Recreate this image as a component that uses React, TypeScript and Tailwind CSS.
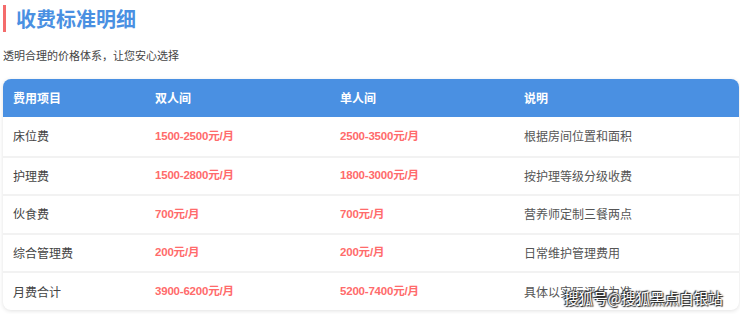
import React from 'react';

const rows = [
  { item: '床位费', double: '1500-2500元/月', single: '2500-3500元/月', note: '根据房间位置和面积' },
  { item: '护理费', double: '1500-2800元/月', single: '1800-3000元/月', note: '按护理等级分级收费' },
  { item: '伙食费', double: '700元/月', single: '700元/月', note: '营养师定制三餐两点' },
  { item: '综合管理费', double: '200元/月', single: '200元/月', note: '日常维护管理费用' },
  { item: '月费合计', double: '3900-6200元/月', single: '5200-7400元/月', note: '具体以实际评估为准' },
];

const cols = 'grid grid-cols-[142px_185px_184px_1fr] items-center';

const App: React.FC = () => {
  return (
    <div className="relative w-[740px] h-[314px] bg-white overflow-hidden font-['Noto_Sans_CJK_SC',sans-serif]">
      {/* Title */}
      <div className="flex items-center h-[27px] mt-[5px] ml-[3px] border-l-[3px] border-[#f46c6c] pl-[10px]">
        <h2 className="text-[20px] font-bold text-[#4a90e2] leading-none">收费标准明细</h2>
      </div>
      <p className="mt-[15px] ml-[3px] text-[11px] leading-[16px] text-[#444]">透明合理的价格体系，让您安心选择</p>

      {/* Table */}
      <div className="mt-[16px] ml-[3px] w-[736px] rounded-[8px] overflow-hidden bg-white shadow-[0_1px_4px_rgba(0,0,0,0.12)]">
        <div className={`${cols} h-[38px] bg-[#4a90e2] text-white text-[12px] font-bold`}>
          <span className="pl-[10px]">费用项目</span>
          <span className="pl-[10px]">双人间</span>
          <span className="pl-[10px]">单人间</span>
          <span className="pl-[10px]">说明</span>
        </div>
        {rows.map((r, i) => (
          <div
            key={r.item}
            className={`${cols} h-[38.6px] text-[12px] ${i > 0 ? 'border-t-2 border-[#f2f2f2]' : ''}`}
          >
            <span className="pl-[10px] text-[#444]">{r.item}</span>
            <span className="pl-[10px] text-[11.5px] tracking-[-0.2px] text-[#ff6b6b] font-bold font-['Liberation_Sans','Noto_Sans_CJK_SC',sans-serif]">{r.double}</span>
            <span className="pl-[10px] text-[11.5px] tracking-[-0.2px] text-[#ff6b6b] font-bold font-['Liberation_Sans','Noto_Sans_CJK_SC',sans-serif]">{r.single}</span>
            <span className="pl-[10px] text-[#555]">{r.note}</span>
          </div>
        ))}
      </div>

      {/* Watermark */}
      <div className="absolute left-[564px] top-[287px] text-[14.5px] leading-[22px] text-white [text-shadow:0_0_2px_#222,1px_1px_1px_#222,-1px_-1px_1px_#222]">
        搜狐号@搜狐黑点白银站
      </div>
    </div>
  );
};

export default App;
